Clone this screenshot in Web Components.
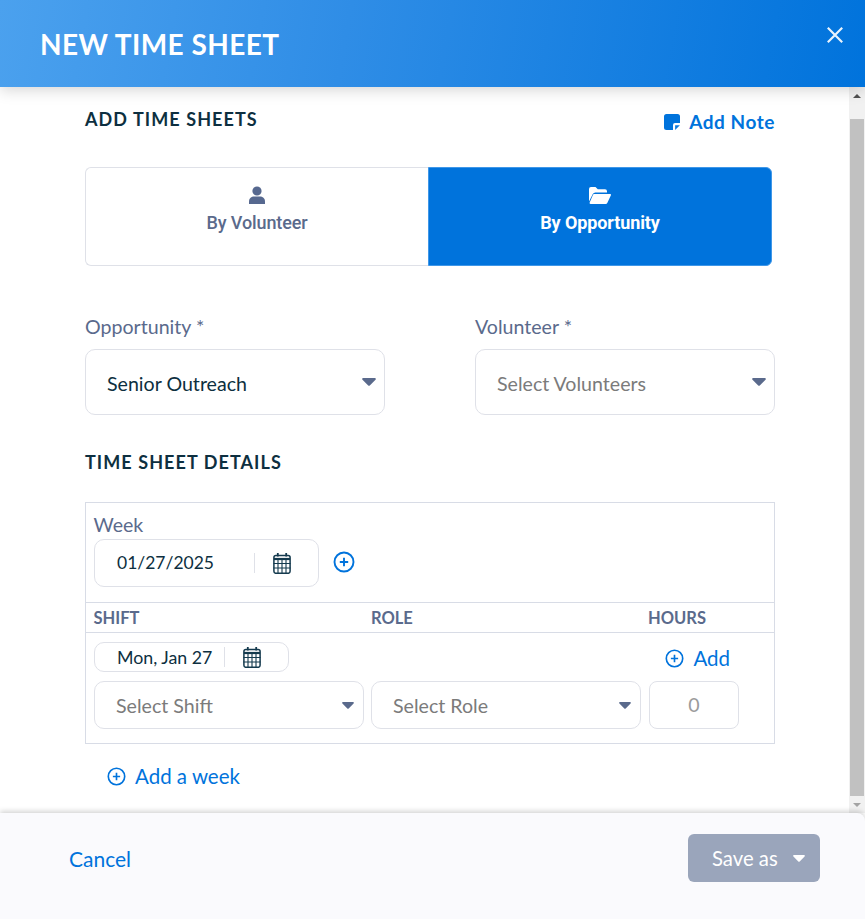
<!DOCTYPE html>
<html lang="en"><head><meta charset="utf-8"><title>New Time Sheet</title>
<style>
html,body{margin:0;padding:0;height:100%;overflow:hidden;background:#fff;font-family:Lato,"Liberation Sans",sans-serif}
</style></head><body>
<ts-app></ts-app>
<template id="cal"><svg viewBox="0 0 18 21" width="18" height="21" fill="none" stroke="#143a4e" stroke-width="1.500" style="display:block;flex:none"><path d="M4.800 0v3.500M13.200 0v3.500" stroke-width="1.800"/><rect x=".9" y="2.500" width="16.200" height="17.800" rx="2"/><path d="M.9 6h16.200" stroke-width="2.200"/><path d="M.5 10.500h17M.5 15h17M5 6.500v13.500M9 6.500v13.500M13 6.500v13.500" stroke-width="1.100"/></svg></template>
<script>
const plus=(s)=>`<svg viewBox="0 0 22 22" width="${s}" height="${s}" fill="none" stroke="#0073dc" style="display:block;flex:none"><circle cx="11" cy="11" r="9.500" stroke-width="1.900"/><path d="M11 6.800v8.400M6.800 11h8.400" stroke-width="1.900"/></svg>`;
const caret=(c,w=14,h=8)=>`<svg viewBox="0 0 14 8" width="${w}" height="${h}" style="display:block;flex:none"><path d="M1.300 0h11.400c1 0 1.500 1.100.8 1.800L7.800 7.500c-.4.400-1.200.400-1.600 0L.5 1.800C-.2 1.100.3 0 1.300 0z" fill="${c}"/></svg>`;
const calIcon=()=>document.getElementById('cal').innerHTML;
function def(name,css,html){customElements.define(name,class extends HTMLElement{constructor(){super();const r=this.attachShadow({mode:'open'});r.innerHTML=`<style>${css}</style>`+(typeof html==='function'?html(this):html);}});}

def('ts-header',`:host{display:flex;flex:none;height:87px;box-sizing:border-box;padding-left:40px;padding-top:1px;align-items:center;justify-content:space-between;background:linear-gradient(100deg,#4ba1ee 0%,#2f8de6 40%,#0073dc 100%);color:#fff;position:relative;z-index:2;box-shadow:0 3px 14px rgba(0,0,0,.17)}
h1{margin:0;font:700 28px/32px Lato,sans-serif;letter-spacing:.45px}
svg{position:absolute;right:22px;top:27px}`,
`<h1><slot></slot></h1><svg viewBox="0 0 16 16" width="16" height="16" fill="none" stroke="#eaf4fd" stroke-width="2.200"><path d="M.8.800l14.400 14.400M15.200.800L.8 15.200"/></svg>`);

def('ts-heading',`:host{display:block;font:700 18px/22px Lato,sans-serif;letter-spacing:1.07px;color:#0d2f40}`,`<slot></slot>`);

def('ts-note',`:host{display:flex;align-items:center;gap:9px;color:#0073dc;font:700 19px/24px Lato,sans-serif;letter-spacing:.55px}`,
`<svg viewBox="0 0 16 16" width="16" height="16" style="display:block"><path d="M2.500 0h11A2.500 2.500 0 0 1 16 2.500V9h-5a2 2 0 0 0-2 2v5H2.500A2.500 2.500 0 0 1 0 13.500v-11A2.500 2.500 0 0 1 2.500 0z" fill="#0073dc"/><path d="M11 11h5l-5 5z" fill="#0073dc" opacity=".95" transform="translate(.7 .7) scale(.95)"/></svg><span><slot></slot></span>`);

def('ts-toggle',`:host{display:grid;grid-template-columns:343px 344px;width:687px;height:99px}`,`<slot></slot>`);

def('ts-tab',`:host{display:flex;flex-direction:column;align-items:center;padding-top:18px;box-sizing:border-box;color:#5a6a8c;font:500 18px/22px Roboto,sans-serif;gap:7px;letter-spacing:-.1px;border:1px solid #dfe1e8;border-right:0;border-radius:6px 0 0 6px}
:host([on]){background:#0073dc;color:#fff;font-weight:700;border:1px solid #3f97e8;border-radius:0 6px 6px 0}
.i{height:20px;margin-top:-1px;display:flex;align-items:center;justify-content:center}`,
`<div class="i"><slot name="i"></slot></div><slot></slot>`);

def('ts-field',`:host{display:flex;flex-direction:column;width:300px;gap:10px;color:#5a6a8c;font:400 19.600px/24px Lato,sans-serif}`,`<slot name="label"></slot><slot></slot>`);

def('ts-select',`:host{display:flex;align-items:center;justify-content:space-between;box-sizing:border-box;height:var(--h,66px);width:var(--w,300px);flex:none;padding:0 8px 0 21px;border:1px solid #dfe1e8;border-radius:10px;background:#fff;color:#7b7b7b;font:400 19.600px/24px Lato,sans-serif}
:host([value]){color:#0d2f40}
span{padding-top:3px}
:host([small]){padding-right:9px}
:host([small]) span{padding-top:1px}
:host([small]) svg{width:12px;height:7px}`,()=>`<span><slot></slot></span>${caret('#5a6a8c')}`);

def('ts-date',`:host{display:flex;align-items:center;box-sizing:border-box;height:var(--h,48px);width:var(--w,225px);flex:none;padding-left:22px;border:1px solid #dfe1e8;border-radius:10px;background:#fff;color:#0d2f40;font:400 var(--fs,17.500px)/24px Lato,sans-serif}
.t{width:var(--t,115px);white-space:nowrap}
.d{width:1px;height:20px;background:#dfe1e8;margin:0 18px 0 var(--g,22px)}`,
()=>`<span class="t"><slot></slot></span><span class="d"></span>${calIcon()}`);

def('ts-add',`:host{display:inline-flex;align-items:center;gap:var(--gap,9px);color:#0073dc;font:400 20.500px/26px Lato,sans-serif}`,
()=>`${plus(19)}<span><slot></slot></span>`);

def('ts-table',`:host{display:block;box-sizing:border-box;width:690px;height:242px;border:1px solid #d8dce6;color:#5a6a8c}
.week{height:99px;box-sizing:border-box;padding:10px 8px 0;font:400 19.600px/24px Lato,sans-serif}
.week>span{margin-left:-.5px}
.r{display:flex;align-items:center;gap:14px;margin-top:2px}
.r svg{margin-top:-2px}
.h{display:grid;grid-template-columns:277.500px 277px 1fr;padding-left:7.500px;height:31px;box-sizing:border-box;border-top:1px solid #d8dce6;border-bottom:1px solid #d8dce6;align-items:center;font:700 16.500px/20px Lato,sans-serif}
.b{padding:9px 8px 0;position:relative}
.c{display:flex;gap:7px;margin-top:9px}
.add{position:absolute;right:44px;top:12px}
.hrs{width:90px;height:48px;box-sizing:border-box;flex:none;margin-left:1px;border:1px solid #dfe1e8;border-radius:8px;display:flex;align-items:center;justify-content:center;color:#9b9b9b;font:400 19.600px/24px Lato,sans-serif}
.pw{--w:195px;--h:30px;--t:88px;--g:19px;--fs:17.800px}
ts-select{--w:270px;--h:48px}`,
`<div class="week"><span>Week</span><div class="r"><ts-date>01/27/2025</ts-date>${plus(22)}</div></div>
<div class="h"><span>SHIFT</span><span>ROLE</span><span>HOURS</span></div>
<div class="b"><ts-date class="pw">Mon, Jan 27</ts-date><ts-add class="add">Add</ts-add>
<div class="c"><ts-select small>Select Shift</ts-select><ts-select small>Select Role</ts-select><div class="hrs">0</div></div></div>`);

def('ts-scrollbar',`:host{display:flex;flex-direction:column;flex:none;width:16px;background:#f1f1f1;box-sizing:border-box;align-items:center}
.a{height:17px;flex:none;display:flex;align-items:center;justify-content:center}
.t{width:14px;flex:1;background:#c1c1c1;margin:15px 0 0}
i{display:block;width:0;height:0;border-left:4px solid transparent;border-right:4px solid transparent}
.u{border-bottom:4px solid #505050}.d{border-top:4px solid #a3a3a3}`,
`<div class="a"><i class="u"></i></div><div class="t"></div><div class="a"><i class="d"></i></div>`);

def('ts-button',`:host{display:flex;align-items:center;box-sizing:border-box;width:132px;height:48px;padding-left:24px;gap:15.500px;background:#9aa5bb;border-radius:6px;color:#fff;font:400 20.300px/24px Lato,sans-serif}`,
()=>`<span><slot></slot></span>${caret('#fff',12,7)}`);

def('ts-footer',`:host{display:flex;flex:none;height:106px;box-sizing:border-box;align-items:center;justify-content:space-between;padding:0 45px 16px 69px;background:#fafafd;position:relative;z-index:2;border-radius:0 8px 0 0;box-shadow:0 -2px 5px rgba(0,0,0,.17);color:#0073dc;font:400 21px/24px Lato,sans-serif}
::slotted(span){padding-top:2px}`,`<slot></slot>`);

def('ts-app',`:host{display:flex;flex-direction:column;height:919px;width:865px;overflow:hidden}
.m{flex:1;display:flex;min-height:0;background:#fff}
.c{flex:1;min-width:0;box-sizing:border-box;padding:21px 74px 0 85px}
.top{display:flex;justify-content:space-between;align-items:flex-start;height:59px}
ts-note{margin:2px 0 0 0}
.f{display:flex;justify-content:space-between;margin-top:49px}
ts-heading.d{margin-top:36px}
ts-table{margin-top:29px}
.aw{display:flex;margin:19px 0 0 22px;width:max-content}
svg{display:block}`,
`<ts-header>NEW TIME SHEET</ts-header>
<div class="m"><div class="c">
<div class="top"><ts-heading>ADD TIME SHEETS</ts-heading><ts-note>Add Note</ts-note></div>
<ts-toggle>
<ts-tab><svg slot="i" viewBox="0 0 16 18" width="16" height="18"><circle cx="8" cy="5" r="4.600" fill="#56688f"/><path d="M0 18v-2.500C0 12 2.500 10.500 5 10.500h6c2.500 0 5 1.500 5 5V18z" fill="#56688f"/></svg>By Volunteer</ts-tab>
<ts-tab on><svg slot="i" viewBox="0 0 22 17" width="22" height="17"><path d="M0 14.500V2a2 2 0 0 1 2-2h4.500l2.300 2.300H16a2 2 0 0 1 2 2V5.500H6.500A3 3 0 0 0 3.800 7z" fill="#fff"/><path d="M5 7h16c.8 0 1.200.7.900 1.300l-3.500 7.500a2 2 0 0 1-1.800 1.200H1.500c-.8 0-1.200-.7-.9-1.300L4 7.700C4.200 7.300 4.600 7 5 7z" fill="#fff"/></svg>By Opportunity</ts-tab>
</ts-toggle>
<div class="f"><ts-field><span slot="label">Opportunity *</span><ts-select value>Senior Outreach</ts-select></ts-field><ts-field><span slot="label">Volunteer *</span><ts-select>Select Volunteers</ts-select></ts-field></div>
<ts-heading class="d">TIME SHEET DETAILS</ts-heading>
<ts-table></ts-table>
<ts-add class="aw">Add a week</ts-add>
</div><ts-scrollbar></ts-scrollbar></div>
<ts-footer><span>Cancel</span><ts-button>Save as</ts-button></ts-footer>`);
</script></body></html>
